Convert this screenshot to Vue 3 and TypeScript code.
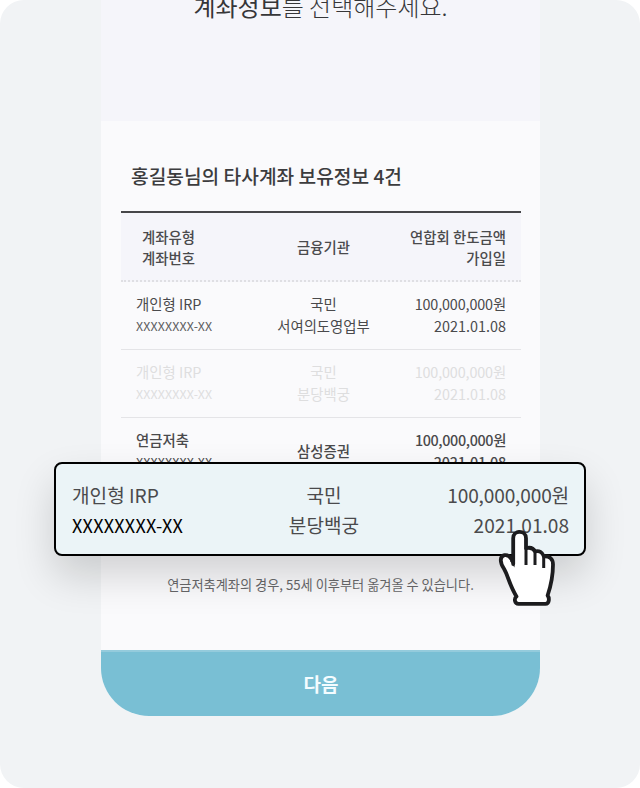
<script setup lang="ts">
interface Account {
  type: string
  number: string
  bank: string[]
  limit: string
  joined: string
  state: 'normal' | 'muted' | 'strong'
}

const accounts: Account[] = [
  { type: '개인형 IRP', number: 'XXXXXXXX-XX', bank: ['국민', '서여의도영업부'], limit: '100,000,000원', joined: '2021.01.08', state: 'normal' },
  { type: '개인형 IRP', number: 'XXXXXXXX-XX', bank: ['국민', '분당백궁'], limit: '100,000,000원', joined: '2021.01.08', state: 'muted' },
  { type: '연금저축', number: 'XXXXXXXX-XX', bank: ['삼성증권'], limit: '100,000,000원', joined: '2021.01.08', state: 'strong' },
]
</script>

<template>
  <main class="stage">
    <section class="phone">
      <header class="intro"><h1><b>계좌정보</b>를 선택해주세요.</h1></header>
      <div class="content">
        <h2>홍길동님의 타사계좌 보유정보 4건</h2>
        <div class="table">
          <div class="row head">
            <div class="cell left"><span>계좌유형</span><span>계좌번호</span></div>
            <div class="cell center"><span>금융기관</span></div>
            <div class="cell right"><span>연합회 한도금액</span><span>가입일</span></div>
          </div>
          <div v-for="(a, i) in accounts" :key="i" class="row" :class="a.state">
            <div class="cell left"><span>{{ a.type }}</span><span class="number">{{ a.number }}</span></div>
            <div class="cell center"><span v-for="b in a.bank" :key="b">{{ b }}</span></div>
            <div class="cell right"><span class="amount">{{ a.limit }}</span><span class="date">{{ a.joined }}</span></div>
          </div>
        </div>
      </div>
      <button class="next" type="button">다음</button>
    </section>

    <div class="picked">
      <div class="cell left"><span>개인형 IRP</span><span class="number">XXXXXXXX-XX</span></div>
      <div class="cell center"><span>국민</span><span>분당백궁</span></div>
      <div class="cell right"><span class="amount">100,000,000원</span><span>2021.01.08</span></div>
    </div>
    <p class="note">연금저축계좌의 경우, 55세 이후부터 옮겨올 수 있습니다.</p>

    <svg class="hand" viewBox="0 0 66 86" width="66" height="86">
      <path
        d="M19.2 40V14.3C19.2 5.8 32 5.8 32 14.3V24.2C36 23.2 39.5 24.3 41 27.4C45 26.3 48.5 28 49.8 32.3C55.5 31.8 59 35 59 40.5C59 51 57.5 60 53.6 71.5C55.6 74 55.4 79.8 51.5 79.8H24.5C20.5 79.8 19.8 74.5 22.5 72.5C16 62.5 14 51.5 10 44.8C5.5 38 5.8 32.4 10.5 31.2C14 30.5 17 33.5 19.2 38Z"
        fill="#fff" stroke="#1c1c1e" stroke-width="3.8" stroke-linejoin="round"
      />
      <path d="M32 24V41M41 27V41M49.7 31V44" fill="none" stroke="#1c1c1e" stroke-width="3" />
      <path d="M20.5 34V43.5L16 37Z" fill="#1c1c1e" />
    </svg>
  </main>
</template>

<style>
body {
  margin: 0;
  background: #fff;
}
</style>

<style scoped>
.stage {
  position: relative;
  display: flex;
  justify-content: center;
  box-sizing: border-box;
  width: 640px;
  height: 788px;
  padding-left: 1px;
  overflow: hidden;
  border-radius: 24px;
  background: #f1f3f5;
  color: #4a4a4c;
  font-family: "Noto Sans CJK KR", "Noto Sans", sans-serif;
}
.phone {
  display: flex;
  flex-direction: column;
  width: 439px;
  height: 716px;
  overflow: hidden;
  border-radius: 0 0 48px 48px;
  background: #fafafc;
}
.intro {
  box-sizing: border-box;
  flex: none;
  height: 121px;
  background: #f5f5fa;
}
h1 {
  margin: -12px 0 0;
  text-align: center;
  font-size: 24px;
  font-weight: 300;
  line-height: 36px;
  color: #363638;
}
h1 b {
  font-weight: 400;
}
.content {
  flex: 1;
  min-height: 0;
  padding: 0 19px 0 20px;
}
h2 {
  margin: 40px 0 19px 10px;
  font-size: 19.2px;
  font-weight: 500;
  line-height: 31px;
  color: #3c3c3e;
}
.table {
  border-top: 2px solid #464649;
}
.row {
  display: grid;
  grid-template-columns: 130px 1fr 130px;
  box-sizing: border-box;
  height: 68px;
  padding: 0 15px 2px;
  border-bottom: 1px solid #e4e4e7;
  font-size: 14.4px;
  line-height: 22px;
}
.head {
  height: 69px;
  padding-bottom: 0;
  border-bottom: 2px dotted #dfdfe3;
  background: #f5f5fa;
  font-weight: 500;
  line-height: 21px;
}
.head .left {
  padding-left: 6px;
}
.cell {
  display: flex;
  flex-direction: column;
  justify-content: center;
  white-space: nowrap;
}
.center {
  align-items: center;
}
.row .center {
  padding-left: 5px;
}
.right {
  align-items: flex-end;
}
.number {
  font-size: 12.4px;
  font-weight: 400;
  letter-spacing: 0.15px;
}
.normal .number {
  color: #5c5c5e;
}
.amount {
  letter-spacing: -0.15px;
}
.muted {
  color: #dededf;
}
.strong {
  font-weight: 500;
}
.strong .amount {
  letter-spacing: -0.38px;
}
.strong .date {
  letter-spacing: -0.2px;
}
.next {
  flex: none;
  height: 66px;
  padding: 0 0 2px 1px;
  border: 0;
  border-top: 2px solid #94cbdc;
  background: #79bfd4;
  color: #f4fcff;
  font: 700 19px "Noto Sans CJK KR", sans-serif;
}
.picked {
  position: absolute;
  top: 462px;
  left: 54px;
  display: grid;
  grid-template-columns: 160px 1fr 160px;
  box-sizing: border-box;
  width: 532px;
  height: 94px;
  padding: 2px 15px 0 16px;
  border: 2px solid #000;
  border-radius: 8px;
  background: #ebf4f7;
  box-shadow: 0 20px 40px rgba(0, 0, 0, 0.16);
  font-size: 19.1px;
  line-height: 30px;
}
.picked .center {
  padding-left: 7px;
}
.picked .number {
  font-size: 18px;
  letter-spacing: 0.25px;
  color: #000;
}
.note {
  position: absolute;
  top: 575px;
  left: 0;
  width: 641px;
  margin: 0;
  text-align: center;
  font-size: 13.2px;
  line-height: 20px;
  color: #626264;
}
.hand {
  position: absolute;
  top: 524px;
  left: 494px;
}
</style>
